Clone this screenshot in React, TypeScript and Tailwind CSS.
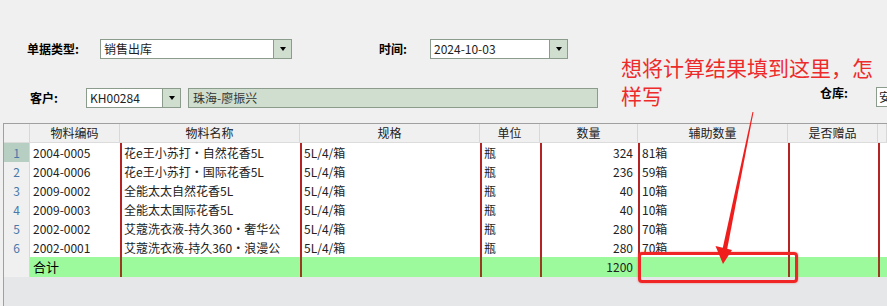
import React from 'react';

const rows = [
  { code: '2004-0005', name: '花e王小苏打・自然花香5L', spec: '5L/4/箱', unit: '瓶', qty: '324', aux: '81箱' },
  { code: '2004-0006', name: '花e王小苏打・国际花香5L', spec: '5L/4/箱', unit: '瓶', qty: '236', aux: '59箱' },
  { code: '2009-0002', name: '全能太太自然花香5L', spec: '5L/4/箱', unit: '瓶', qty: '40', aux: '10箱' },
  { code: '2009-0003', name: '全能太太国际花香5L', spec: '5L/4/箱', unit: '瓶', qty: '40', aux: '10箱' },
  { code: '2002-0002', name: '艾蔻洗衣液-持久360・奢华公', spec: '5L/4/箱', unit: '瓶', qty: '280', aux: '70箱' },
  { code: '2002-0001', name: '艾蔻洗衣液-持久360・浪漫公', spec: '5L/4/箱', unit: '瓶', qty: '280', aux: '70箱' },
];

const COLS = 'grid grid-cols-[26px_90px_180px_180px_60px_98px_150px_90px_1fr]';

const DropBtn = () => (
  <div className="flex h-full w-[18px] items-center justify-center border-l border-[#8c9c8c] bg-[#cfdecf]">
    <div className="h-0 w-0 border-x-[3px] border-t-[4px] border-x-transparent border-t-black" />
  </div>
);

const Combo = ({ value, width }: { value: string; width: string }) => (
  <div className={`flex h-[20px] shrink-0 ${width} items-stretch border border-[#8c9c8c] bg-white`}>
    <div className="flex flex-1 items-center pl-[3px] text-[12px] text-[#222]">{value}</div>
    <DropBtn />
  </div>
);

export default function App() {
  const redCell = 'border-l-2 border-[#b52424]';
  return (
    <div
      className="relative h-[306px] w-[887px] overflow-hidden bg-[#f0f0f0] text-[12px] text-[#222]"
      style={{ fontFamily: '"Noto Sans CJK SC", "Liberation Sans", sans-serif' }}
    >
      {/* form */}
      <div className="h-[123px] pt-[39px]">
        <div className="flex h-[20px] items-center">
          <div className="ml-[27px] w-[73px] shrink-0 font-bold text-black">单据类型:</div>
          <Combo value="销售出库" width="w-[192px]" />
          <div className="ml-[87px] w-[51px] shrink-0 font-bold text-black">时间:</div>
          <Combo value="2024-10-03" width="w-[138px]" />
        </div>
        <div className="mt-[29px] flex h-[20px] items-center">
          <div className="ml-[30px] w-[56px] shrink-0 font-bold text-black">客户:</div>
          <Combo value="KH00284" width="w-[95px]" />
          <div className="ml-[7px] flex h-[20px] w-[410px] shrink-0 items-center border border-[#8c9c8c] bg-[#cfdecf] pl-[4px] text-[#333]">
            珠海-廖振兴
          </div>
          <div className="ml-[222px] -mt-[10px] w-[56px] shrink-0 font-bold text-black">仓库:</div>
          <div className="-mt-[2px] flex h-[20px] w-[30px] shrink-0 items-center border border-[#8c9c8c] bg-white pl-[2px]">
            安
          </div>
        </div>
      </div>

      {/* grid */}
      <div className="ml-[3px] h-[183px] border-l border-t border-[#a0a0a0] bg-[#e6e7e9]">
        <div className={`${COLS} h-[19px] border-b border-[#dcdcdc] bg-[#f0f0f0]`}>
          <div className="border-r border-[#d8d8d8]" />
          {['物料编码', '物料名称', '规格', '单位', '数量', '辅助数量', '是否赠品', ''].map((h, i) => (
            <div key={i} className="flex items-center justify-center border-r border-[#d8d8d8]">
              {h}
            </div>
          ))}
        </div>
        {rows.map((r, i) => (
          <div key={i} className={`${COLS} h-[19px] leading-[19px]`}>
            <div
              className={`border-b border-r border-[#d6d9dc] text-center text-[#4a78a8] ${
                i === 0 ? 'bg-[#b6cfc2]' : 'bg-[#f0f0f0]'
              }`}
            >
              {i + 1}
            </div>
            <div className="bg-white pl-[3px]">{r.code}</div>
            <div className={`overflow-hidden whitespace-nowrap bg-white pl-[2px] ${redCell}`}>{r.name}</div>
            <div className={`bg-white pl-[2px] ${redCell}`}>{r.spec}</div>
            <div className={`bg-white pl-[2px] ${redCell}`}>{r.unit}</div>
            <div className={`bg-white pr-[5px] text-right ${redCell}`}>{r.qty}</div>
            <div className={`bg-white pl-[2px] ${redCell}`}>{r.aux}</div>
            <div className={`bg-white ${redCell}`} />
            <div className={`bg-white ${redCell}`} />
          </div>
        ))}
        <div className={`${COLS} h-[20px] leading-[20px]`}>
          <div className="border-r border-[#d6d9dc] bg-[#f0f0f0]" />
          <div className="bg-[#9cf99c] pl-[3px] text-[13px] text-black">合计</div>
          <div className="border-l-2 border-[#9a3a20] bg-[#9cf99c]" />
          <div className="border-l-2 border-[#9a3a20] bg-[#9cf99c]" />
          <div className="border-l-2 border-[#9a3a20] bg-[#9cf99c]" />
          <div className="border-l-2 border-[#9a3a20] bg-[#9cf99c] pr-[5px] text-right">1200</div>
          <div className="border-l-2 border-[#9a3a20] bg-[#9cf99c]" />
          <div className="border-l-2 border-[#9a3a20] bg-[#9cf99c]" />
          <div className="border-l-2 border-[#9a3a20] bg-[#9cf99c]" />
        </div>
      </div>

      {/* annotation */}
      <div className="absolute left-[621px] top-[53px] text-[21px] leading-[28px] text-[#ee2b2b]">
        想将计算结果填到这里，怎
        <br />
        样写
      </div>
      <div className="absolute left-[638px] top-[252px] h-[31px] w-[160px] rounded-[4px] border-[3px] border-[#f02525] shadow-[0_0_2px_rgba(240,37,37,0.6)]" />
      <svg className="absolute left-0 top-0" width="887" height="306">
        <polygon points="752.5,112 753.5,112 727,250 722.5,249" fill="#f01d1d" />
        <polygon points="723,264 715.5,246 732,250" fill="#f01d1d" />
      </svg>
    </div>
  );
}
